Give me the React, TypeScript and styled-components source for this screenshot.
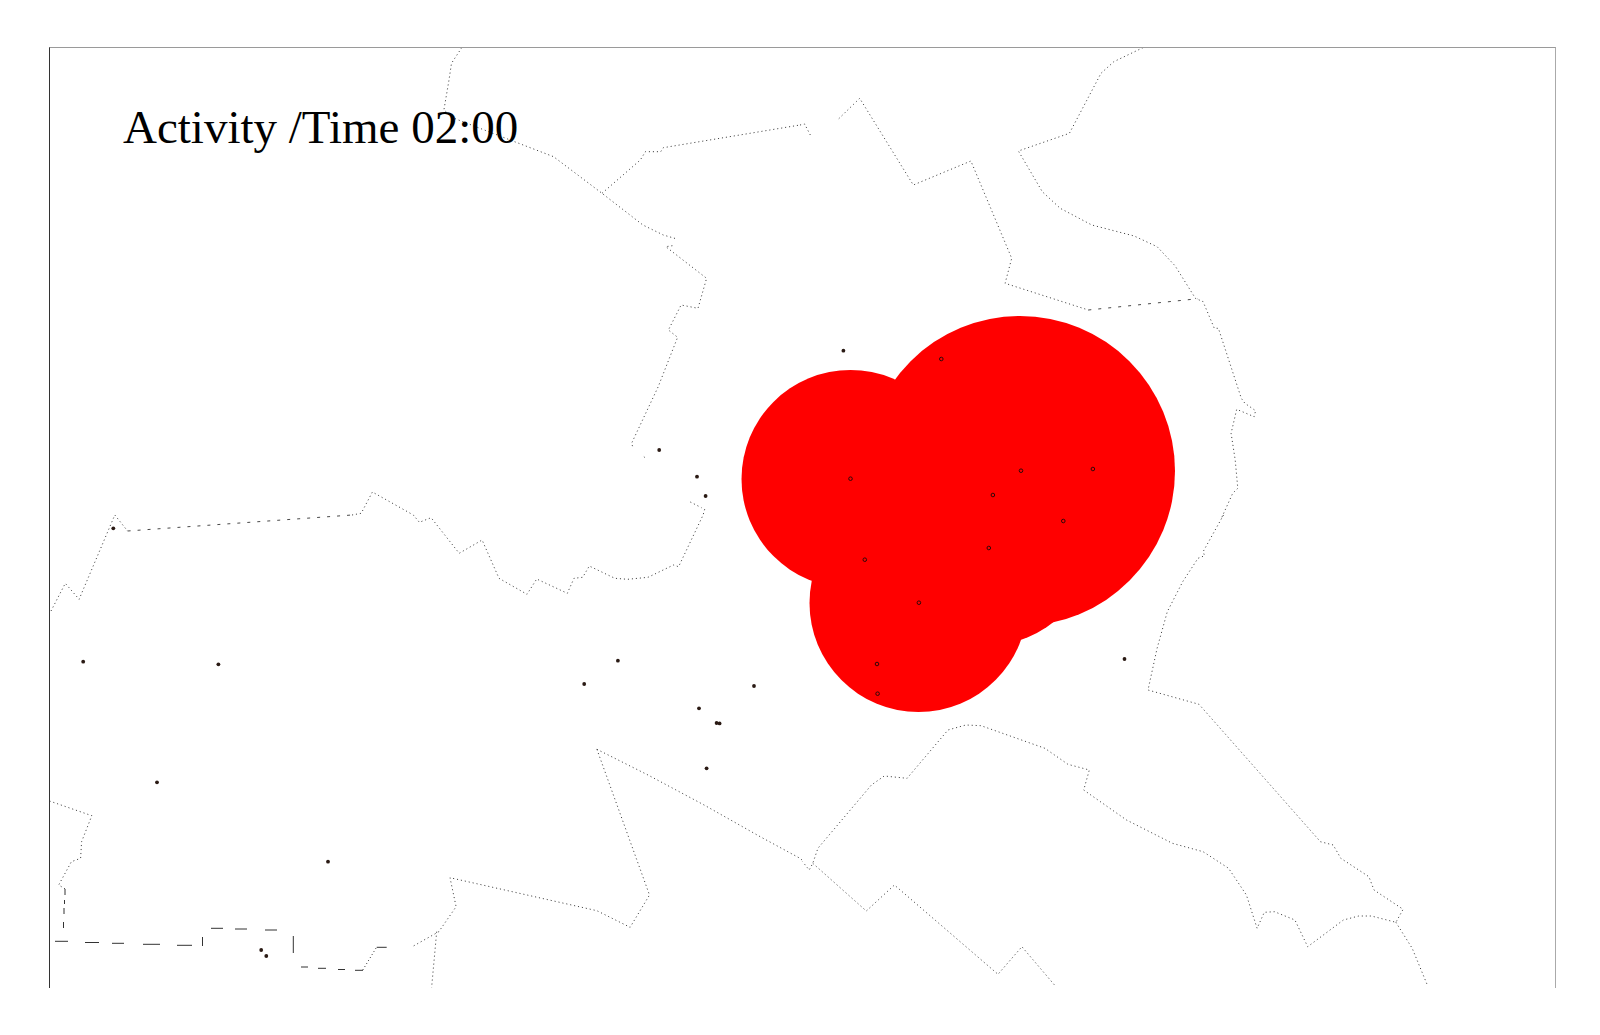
import React from "react";
import styled, { createGlobalStyle } from "styled-components";

const GlobalStyle = createGlobalStyle`
  html, body { margin: 0; padding: 0; background: #fff; }
`;

const Page = styled.main`
  width: 1600px;
  height: 1035px;
  box-sizing: border-box;
  padding: 47px 0 0 49px;
  overflow: hidden;
`;

const Frame = styled.section`
  position: relative;
  width: 1507px;
  height: 941px;
  box-sizing: border-box;
  border-top: 1px solid #9a9a9a;
  border-left: 1px solid #333;
  border-right: 1px solid #aaa;
`;

const MapDrawing = styled.svg`
  display: block;
  width: 100%;
  height: 100%;
`;

const Caption = styled.h1`
  position: absolute;
  left: 73px;
  top: 56px;
  margin: 0;
  font: 400 47px/1 "Liberation Serif", "Times New Roman", serif;
  color: #000;
  white-space: nowrap;
`;

type Pt = [number, number];

/** Boundary traces were read at 1.96x / 3x around a crop origin. */
const trace = (ox: number, oy: number, pts: Pt[]): string =>
  pts
    .map(([x, y], i) => `${i ? "L" : "M"}${(ox + x / 1.96).toFixed(1)} ${(oy + y / 3).toFixed(1)}`)
    .join(" ");

const dottedBoundaries: string[] = [
  trace(0, 0, [[905, 143], [885, 190], [880, 240], [870, 330], [890, 355], [1000, 420], [1085, 470], [1180, 580], [1260, 675], [1300, 705], [1325, 716]]),
  trace(0, 0, [[1318, 737], [1305, 740], [1385, 835], [1368, 925], [1335, 915], [1310, 990], [1328, 1012], [1290, 1160], [1238, 1330], [1240, 1340]]),
  trace(0, 0, [[1262, 1370], [1268, 1378]]),
  trace(0, 0, [[1180, 580], [1255, 480], [1265, 455], [1295, 455], [1300, 443], [1568, 375]]),
  trace(800, 0, [[0, 375], [9, 372], [22, 410]]),
  trace(800, 0, [[76, 356], [117, 295], [222, 555], [335, 483], [415, 775], [402, 850], [565, 930]]),
  trace(800, 0, [[672, 143], [615, 185], [590, 220], [528, 400], [428, 453], [475, 575], [510, 625], [572, 675], [655, 708], [700, 740], [735, 797], [775, 895], [790, 905], [812, 985], [820, 985], [865, 1195], [872, 1210], [893, 1232], [890, 1250], [856, 1228], [845, 1300], [853, 1380], [858, 1465], [848, 1480], [826, 1555]]),
  trace(800, 515, [[830, 0], [790, 110], [793, 122], [780, 130], [750, 200], [720, 290], [700, 400], [682, 525], [782, 568], [1020, 980], [1045, 990], [1060, 1030], [1115, 1085], [1125, 1125], [1182, 1183], [1168, 1222], [1120, 1203], [1095, 1203], [1065, 1215], [995, 1295], [970, 1215], [930, 1190], [910, 1192], [896, 1240], [875, 1140], [840, 1060], [790, 1010], [730, 985], [640, 915], [556, 825], [567, 765], [525, 748], [480, 700], [355, 632], [325, 630], [290, 645], [210, 790], [165, 783], [140, 810], [35, 1000], [25, 1045], [18, 1065], [5, 1040]]),
  trace(800, 515, [[25, 1045], [130, 1188], [185, 1110], [388, 1378], [435, 1295], [500, 1412]]),
  trace(800, 515, [[1168, 1222], [1200, 1300], [1230, 1412]]),
  trace(0, 515, [[1170, 703], [1270, 780], [1380, 870], [1490, 965], [1568, 1030], [1572, 1035]]),
  trace(0, 515, [[1170, 703], [1273, 1140], [1235, 1237], [1170, 1187], [882, 1088], [894, 1175], [860, 1250], [808, 1295]]),
  trace(0, 515, [[100, 288], [128, 205], [155, 253], [225, 0], [250, 48]]),
  trace(0, 515, [[690, 0], [708, -5], [730, -69], [810, 0], [822, 22], [845, 8], [900, 115], [945, 75], [978, 190], [1033, 238], [1052, 192], [1112, 235], [1125, 190], [1142, 187], [1155, 153], [1205, 190], [1230, 193], [1270, 187], [1320, 150], [1330, 155], [1378, 0], [1382, -22]]),
  trace(0, 515, [[1353, -39], [1375, -22]]),
  trace(0, 515, [[97, 858], [180, 902], [160, 980], [158, 1030], [140, 1040], [115, 1110], [128, 1122]]),
  trace(0, 515, [[856, 1250], [846, 1418]]),
];

const sparseBoundaries: string[] = [
  trace(0, 515, [[250, 48], [690, 0]]),
  trace(800, 0, [[565, 930], [780, 896]]),
];

/** Solid dashes: the south-west edge comes out of the raster as isolated strokes. */
const dashes: [number, number, number, number][] = [
  [65, 889, 65, 895], [64.5, 900, 64.5, 904],
  [64, 908, 64, 914], [63.5, 922, 63.5, 928],
  [55, 941.3, 68, 941.3], [85, 942.5, 99, 942.5], [112, 943.3, 124, 943.3], [143, 944.3, 160, 944.3], [177, 945.3, 192, 945.3],
  [202.5, 937, 202.5, 946],
  [211, 928.3, 223, 928.3], [235, 929, 247, 929], [265, 930, 277, 930],
  [293.3, 936, 293.3, 953],
  [301, 967, 308, 967], [318, 968.3, 326, 968.3], [338, 969.5, 345, 969.5], [355, 970.3, 363, 970.3],
  [376.7, 947.3, 386.7, 947.3],
];

const stepDiagonal = trace(0, 0, [[711, 2910], [738, 2842]]);

const blobs: [number, number, number][] = [
  [1020, 471, 155],
  [850.5, 479, 109],
  [918.5, 603, 109],
  [986.5, 537.5, 108],
];

const dotsOnWhite: Pt[] = [
  [843.4, 350.7], [659.2, 450], [697, 476.7], [705.6, 496], [113.3, 528.3],
  [83.2, 661.7], [218.4, 664.3], [617.9, 660.7], [584.2, 684], [754, 686],
  [699, 708.3], [716.6, 723], [719.6, 723.4], [706.6, 768.3], [157, 782.3],
  [328, 861.7], [261.2, 950], [266.3, 956], [1124.5, 659],
];

const dotsOnRed: Pt[] = [
  [941.3, 359], [850.5, 478.7], [1021, 470.7], [1092.9, 469], [992.9, 495],
  [1063.3, 521], [988.8, 548], [864.8, 559.7], [918.9, 602.7], [877, 664], [877.6, 693.7],
];

export default function App() {
  return (
    <Page>
      <GlobalStyle />
      <Frame>
        <MapDrawing viewBox="50 48 1505 940" preserveAspectRatio="xMinYMin slice" aria-hidden="true">
          {dottedBoundaries.map((d, i) => (
            <path key={i} d={d} fill="none" stroke="#2e2e2e" strokeWidth={0.9} strokeDasharray="1.1 2.9" />
          ))}
          {sparseBoundaries.map((d, i) => (
            <path key={i} d={d} fill="none" stroke="#333" strokeWidth={0.9} strokeDasharray="3 7" />
          ))}
          <path d={stepDiagonal} fill="none" stroke="#333" strokeWidth={0.9} strokeDasharray="1.1 2.4" />
          {dashes.map(([x1, y1, x2, y2], i) => (
            <line key={i} x1={x1} y1={y1} x2={x2} y2={y2} stroke="#333" strokeWidth={1} />
          ))}
          {blobs.map(([cx, cy, r], i) => (
            <circle key={i} cx={cx} cy={cy} r={r} fill="#ff0000" />
          ))}
          {dotsOnWhite.map(([cx, cy], i) => (
            <circle key={i} cx={cx} cy={cy} r={1.9} fill="#2a1a14" />
          ))}
          {dotsOnRed.map(([cx, cy], i) => (
            <circle key={i} cx={cx} cy={cy} r={1.8} fill="#ff0000" stroke="#300808" strokeWidth={1} />
          ))}
        </MapDrawing>
        <Caption>Activity /Time 02:00</Caption>
      </Frame>
    </Page>
  );
}
